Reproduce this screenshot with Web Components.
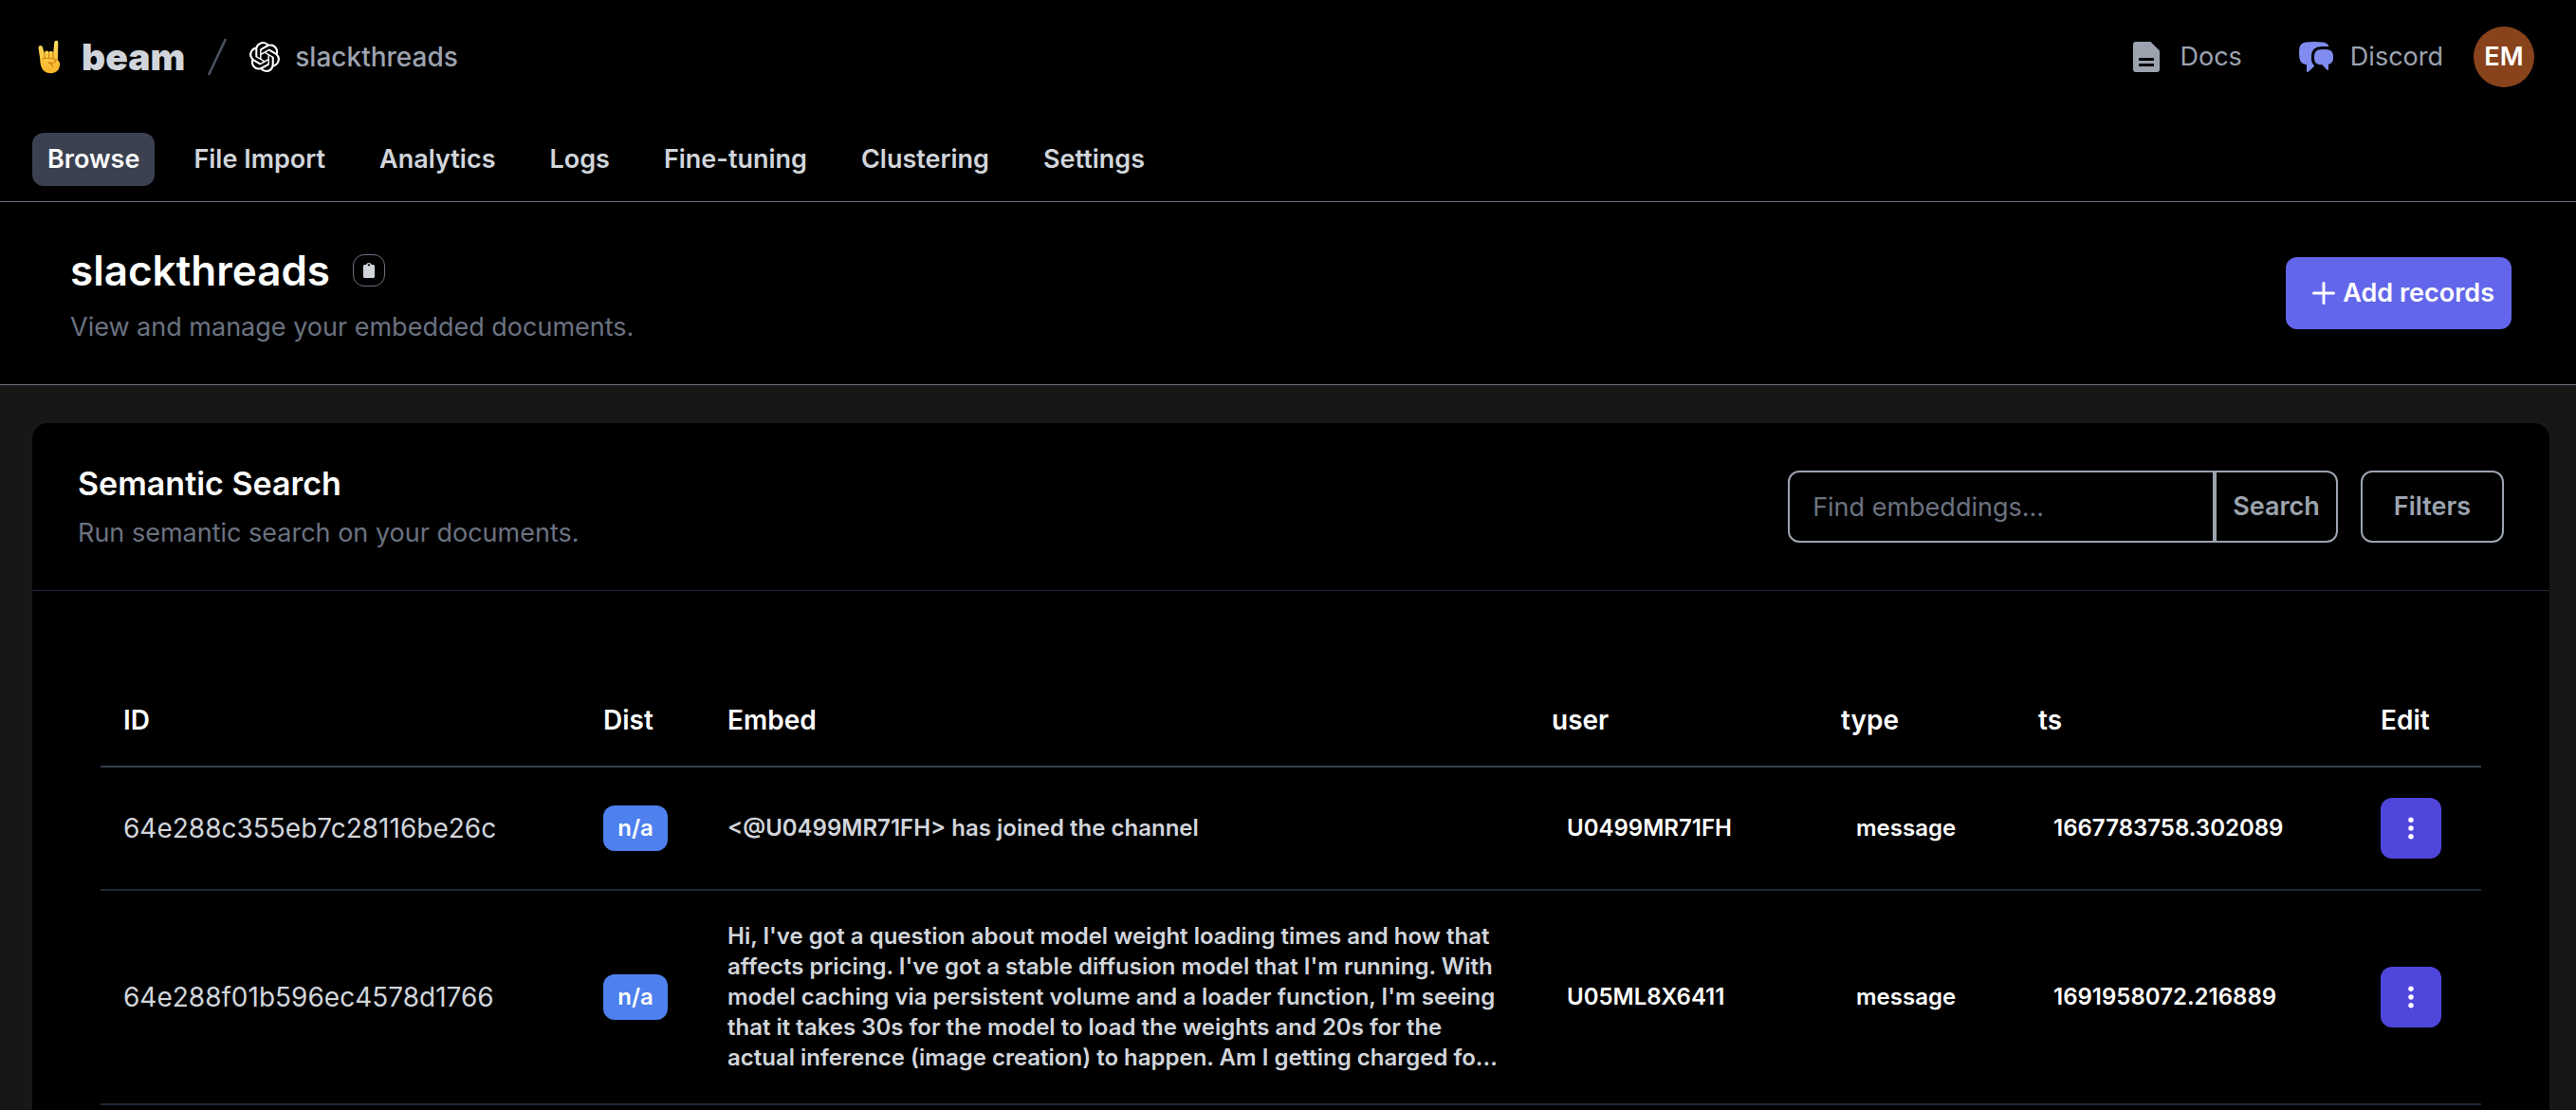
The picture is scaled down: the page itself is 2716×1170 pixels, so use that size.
<!DOCTYPE html>
<html lang="en">
<head>
<meta charset="utf-8">
<meta name="viewport" content="width=device-width, initial-scale=1">
<title>slackthreads – beam</title>
<style>
  html, body { margin: 0; background: #171717; }
  body {
    min-height: 100vh;
    display: flex;
    flex-direction: column;
    color: #fff;
    font: 400 27px/40px Inter, "Liberation Sans", sans-serif;
  }
</style>
</head>
<body>
<beam-header project="slackthreads" initials="EM"></beam-header>
<beam-tabs>
  <beam-tab current>Browse</beam-tab>
  <beam-tab>File Import</beam-tab>
  <beam-tab>Analytics</beam-tab>
  <beam-tab>Logs</beam-tab>
  <beam-tab>Fine-tuning</beam-tab>
  <beam-tab>Clustering</beam-tab>
  <beam-tab>Settings</beam-tab>
</beam-tabs>
<page-heading>
  <span slot="title">slackthreads</span>
  <span slot="subtitle">View and manage your embedded documents.</span>
</page-heading>
<search-panel>
  <span slot="title">Semantic Search</span>
  <span slot="subtitle">Run semantic search on your documents.</span>
  <search-controls slot="controls"></search-controls>
  <records-table></records-table>
</search-panel>

<script>
const ICONS = {
  rock: `<svg width="24" height="36" viewBox="0 0 24 36"><defs><linearGradient id="g" x1="0" y1="0" x2="0" y2="1"><stop offset="0" stop-color="#ffdc5e"/><stop offset="1" stop-color="#f9b527"/></linearGradient></defs>
    <path fill="url(#g)" d="M2 6.200q2.200-.7 2.900 1.500l2.100 7.200V13.500q.3-2 2.300-2 1.900 0 2.200 1.700.6-1.500 2.400-1.500 1.600 0 2 1.600l.4-.6L17.300 2.500Q17.600.8 19.400.8q1.900.1 1.900 2.200l-.4 18.200q2.700 2.400 2.100 6Q21.700 34.700 14 35.200 5.500 35.500 3.200 27.500 2.300 24.200 2.200 20L.5 8.500Q.4 6.800 2 6.200z"/>
    <path fill="none" stroke="#cf7f12" stroke-width="1.100" stroke-linecap="round" d="M7 14.800v4M11.500 14v5M16 13.500v5.500M4.800 20.500q1.800-1.700 4.200-1.300l8 .8q1.800.5 1.600 2.300-.5 2-2.600 2l-4.800-.2M20.600 21q-1.800.2-2.200 1.500M12 24.500q3.200.8 3.600 4"/></svg>`,
  slash: `<svg width="20" height="40" viewBox="0 0 20 40"><path d="M1 39 19 1" stroke="#4b5563" stroke-width="2.400"/></svg>`,
  openai: `<svg width="32" height="32" viewBox="0 0 24 24" fill="#fff"><path d="M22.2819 9.8211a5.9847 5.9847 0 0 0-.5157-4.9108 6.0462 6.0462 0 0 0-6.5098-2.9A6.0651 6.0651 0 0 0 4.9807 4.1818a5.9847 5.9847 0 0 0-3.9977 2.9 6.0462 6.0462 0 0 0 .7427 7.0966 5.98 5.98 0 0 0 .511 4.9107 6.051 6.051 0 0 0 6.5146 2.9001A5.9847 5.9847 0 0 0 13.2599 24a6.0557 6.0557 0 0 0 5.7718-4.2058 5.9894 5.9894 0 0 0 3.9977-2.9001 6.0557 6.0557 0 0 0-.7475-7.0729zm-9.022 12.6081a4.4755 4.4755 0 0 1-2.8764-1.0408l.1419-.0804 4.7783-2.7582a.7948.7948 0 0 0 .3927-.6813v-6.7369l2.02 1.1686a.071.071 0 0 1 .038.052v5.5826a4.504 4.504 0 0 1-4.4945 4.4944zm-9.6607-4.1254a4.4708 4.4708 0 0 1-.5346-3.0137l.142.0852 4.783 2.7582a.7712.7712 0 0 0 .7806 0l5.8428-3.3685v2.3324a.0804.0804 0 0 1-.0332.0615L9.74 19.9502a4.4992 4.4992 0 0 1-6.1408-1.6464zM2.3408 7.8956a4.485 4.485 0 0 1 2.3655-1.9728V11.6a.7664.7664 0 0 0 .3879.6765l5.8144 3.3543-2.0201 1.1685a.0757.0757 0 0 1-.071 0l-4.8303-2.7865A4.504 4.504 0 0 1 2.3408 7.872zm16.5963 3.8558L13.1038 8.364 15.1192 7.2a.0757.0757 0 0 1 .071 0l4.8303 2.7913a4.4944 4.4944 0 0 1-.6765 8.1042v-5.6772a.79.79 0 0 0-.407-.667zm2.0107-3.0231l-.142-.0852-4.7735-2.7818a.7759.7759 0 0 0-.7854 0L9.409 9.2297V6.8974a.0662.0662 0 0 1 .0284-.0615l4.8303-2.7866a4.4992 4.4992 0 0 1 6.6802 4.66zM8.3065 12.863l-2.02-1.1638a.0804.0804 0 0 1-.038-.0567V6.0742a4.4992 4.4992 0 0 1 7.3757-3.4537l-.142.0805L8.704 5.459a.7948.7948 0 0 0-.3927.6813zm1.0976-2.3654l2.602-1.4998 2.6069 1.4998v2.9994l-2.5974 1.4997-2.6067-1.4997Z"/></svg>`,
  doc: `<svg width="28" height="32" viewBox="0 0 28 32"><path fill="#9ca3af" fill-rule="evenodd" d="M3 0H18.500L28 9.500V29a3 3 0 0 1-3 3H3a3 3 0 0 1-3-3V3a3 3 0 0 1 3-3zM6.600 17a.6.6 0 0 0-.6.6v1.800a.6.6 0 0 0 .6.6h14.800a.6.6 0 0 0 .6-.6v-1.800a.6.6 0 0 0-.6-.6zM6.600 23a.6.6 0 0 0-.6.6v1.800a.6.6 0 0 0 .6.6h14.800a.6.6 0 0 0 .6-.6v-1.800a.6.6 0 0 0-.6-.6z"/></svg>`,
  chat: `<svg width="36" height="32" viewBox="0 0 36 32" fill="#818cf1"><path d="M7 .6Q15.500-.6 25 .6 30.500 1.200 31.400 5H23.500Q13 5.500 13 15V18.500Q13 22.500 16.200 25.800L10 31.600Q8 32.600 8 30.800V24Q1.500 23.600.5 17.500-.4 12 .4 6.500 1.200 1.500 7 .6z"/><path d="M22 8.300Q26 7.700 30 8.300 35 9 35.700 13 36.300 16.500 35.700 19.500 34.800 23 31 23.700V28.500Q31 30.800 29.200 29.500L24.500 24.200Q17.200 24.500 16.300 19.500 15.700 16 16.300 13 17.200 9 22 8.300z"/></svg>`,
  clipboard: `<svg width="12" height="16" viewBox="0 0 12 16"><path fill="#d1d5db" fill-rule="evenodd" d="M3.300 2Q3.500 0 6 0T8.700 2H10.500Q12 2 12 3.500V14.500Q12 16 10.500 16H1.500Q0 16 0 14.500V3.500Q0 2 1.500 2zM6 1.200a1.200 1.200 0 0 0-1.200 1.200V3.200h2.400V2.400A1.200 1.200 0 0 0 6 1.200z"/></svg>`,
  plus: `<svg width="24" height="24" viewBox="0 0 24 24"><path d="M12 1.500v21M1.500 12h21" stroke="#fff" stroke-width="3" stroke-linecap="round"/></svg>`,
  dots: `<svg width="6" height="24" viewBox="0 0 6 24" fill="#fff"><circle cx="3" cy="3.200" r="2.700"/><circle cx="3" cy="12" r="2.700"/><circle cx="3" cy="20.800" r="2.700"/></svg>`
};

const BASE = `
  * { box-sizing: border-box; }
  svg { display: block; flex: none; }
  a { color: inherit; text-decoration: none; }
  button, input { font: inherit; margin: 0; }
  button { cursor: pointer; }
`;

class BeamElement extends HTMLElement {
  constructor() {
    super();
    this.attachShadow({ mode: 'open' });
  }
  connectedCallback() {
    this.shadowRoot.innerHTML = `<style>${BASE}${this.styles()}</style>${this.markup()}`;
  }
}

customElements.define('beam-icon', class extends BeamElement {
  styles() { return `:host { display: block; flex: none; }`; }
  markup() { return ICONS[this.getAttribute('name')]; }
});

customElements.define('beam-header', class extends BeamElement {
  styles() { return `
    :host { display: block; background: #000; color: #9ca3af; }
    header { display: flex; align-items: center; justify-content: space-between; padding: 28px 44px 0 40px; }
    .crumbs, .links { display: flex; align-items: center; }
    .brand { display: flex; align-items: center; gap: 22px; margin-right: 24px; color: #d1d5db; font-size: 39px; font-weight: 900; }
    .project { display: flex; align-items: center; gap: 16px; margin-left: 24px; font-size: 28px; font-weight: 500; }
    .link { display: flex; align-items: center; }
    .docs { gap: 22px; margin-right: 60px; }
    .chat { gap: 18px; margin-right: 32px; }
    .avatar { width: 64px; height: 64px; padding: 0; border: 0; border-radius: 50%; background: #88431c; color: #fff; font-weight: 600; }
  `; }
  markup() { return `
    <header>
      <div class="crumbs">
        <a class="brand" href="#"><beam-icon name="rock"></beam-icon>beam</a>
        <beam-icon name="slash"></beam-icon>
        <a class="project" href="#"><beam-icon name="openai"></beam-icon>${this.getAttribute('project')}</a>
      </div>
      <div class="links">
        <a class="link docs" href="#"><beam-icon name="doc"></beam-icon>Docs</a>
        <a class="link chat" href="#"><beam-icon name="chat"></beam-icon>Discord</a>
        <button class="avatar">${this.getAttribute('initials')}</button>
      </div>
    </header>`; }
});

customElements.define('beam-tabs', class extends BeamElement {
  styles() { return `
    :host { display: block; background: #000; border-bottom: 1px solid #6b7280; }
    nav { display: flex; gap: 25px; padding: 48px 34px 16px; }
  `; }
  markup() { return `<nav><slot></slot></nav>`; }
});

customElements.define('beam-tab', class extends BeamElement {
  styles() { return `
    :host { display: block; color: #d1d5db; font-weight: 600; }
    a { display: block; padding: 8px 16px; border-radius: 12px; white-space: nowrap; }
    :host([current]) a { background: #3b4150; color: #f9fafb; }
  `; }
  markup() { return `<a href="#"><slot></slot></a>`; }
});

customElements.define('page-heading', class extends BeamElement {
  styles() { return `
    :host { display: block; background: #000; border-bottom: 1px solid #6b7280; }
    section { display: flex; align-items: center; justify-content: space-between; padding: 40px 68px 40px 74px; }
    .row { display: flex; align-items: center; gap: 24px; }
    h1 { margin: 0; font-size: 44px; line-height: 64px; font-weight: 600; }
    p { margin: 8px 0 0; color: #6b7280; }
    .copy { display: flex; align-items: center; justify-content: center; width: 34px; height: 34px; padding: 0; border: 1px solid #6b7280; border-radius: 12px; background: none; }
    .add { display: flex; align-items: center; gap: 8px; height: 76px; padding: 0 18px 0 28px; border: 0; border-radius: 12px; background: #6366ea; color: #fff; font-weight: 600; white-space: nowrap; }
  `; }
  markup() { return `
    <section>
      <div>
        <div class="row">
          <h1><slot name="title"></slot></h1>
          <button class="copy" aria-label="Copy name"><beam-icon name="clipboard"></beam-icon></button>
        </div>
        <p><slot name="subtitle"></slot></p>
      </div>
      <button class="add"><beam-icon name="plus"></beam-icon>Add records</button>
    </section>`; }
});

customElements.define('search-panel', class extends BeamElement {
  styles() { return `
    :host { display: flex; flex: 1; padding: 40px 28px 0 34px; }
    section { flex: 1; min-width: 0; border-radius: 16px 16px 0 0; background: #000; }
    .head { display: flex; align-items: center; justify-content: space-between; padding: 40px 48px; border-bottom: 1px solid #1f2937; }
    h2 { margin: 0; font-size: 34px; line-height: 48px; font-weight: 600; }
    p { margin: 8px 0 0; color: #6b7280; }
    .body { padding: 88px 72px 0; }
  `; }
  markup() { return `
    <section>
      <div class="head">
        <div>
          <h2><slot name="title"></slot></h2>
          <p><slot name="subtitle"></slot></p>
        </div>
        <slot name="controls"></slot>
      </div>
      <div class="body"><slot></slot></div>
    </section>`; }
});

customElements.define('search-controls', class extends BeamElement {
  styles() { return `
    :host { display: flex; gap: 24px; color: #9ca3af; }
    form { display: flex; }
    input, button { height: 76px; border: 2px solid #9ca3af; background: #000; color: inherit; }
    input { width: 450px; padding: 0 24px; border-radius: 12px 0 0 12px; outline: 0; }
    input::placeholder { color: #6b7280; opacity: 1; }
    button { padding: 0 17px; border-radius: 0 12px 12px 0; font-weight: 600; }
    .filters { padding: 0 33px; border-radius: 12px; }
  `; }
  markup() { return `
    <form onsubmit="return false">
      <input type="text" aria-label="Find embeddings" placeholder="Find embeddings...">
      <button type="submit">Search</button>
    </form>
    <button class="filters" type="button">Filters</button>`; }
});

const RECORDS = [
  { id: '64e288c355eb7c28116be26c', dist: 'n/a', embed: '&lt;@U0499MR71FH&gt; has joined the channel', user: 'U0499MR71FH', type: 'message', ts: '1667783758.302089' },
  { id: '64e288f01b596ec4578d1766', dist: 'n/a', embed: "Hi, I've got a question about model weight loading times and how that affects pricing. I've got a stable diffusion model that I'm running. With model caching via persistent volume and a loader function, I'm seeing that it takes 30s for the model to load the weights and 20s for the actual inference (image creation) to happen. Am I getting charged fo...", user: 'U05ML8X6411', type: 'message', ts: '1691958072.216889' }
];

customElements.define('records-table', class extends BeamElement {
  styles() { return `
    :host { display: block; }
    table { width: 100%; table-layout: fixed; border-collapse: separate; border-spacing: 0; }
    .c-id { width: 506px; } .c-dist { width: 131px; } .c-embed { width: 869px; } .c-user { width: 305px; }
    .c-type { width: 208px; } .c-ts { width: 361px; } .c-edit { width: 130px; }
    th { padding: 28px 24px; border-bottom: 2px solid #374151; text-align: left; font-size: 28px; font-weight: 600; }
    td { padding: 32px 24px; border-bottom: 2px solid #1f2937; vertical-align: middle; }
    .id { color: #d1d5db; font-size: 28px; }
    .badge { display: block; width: 68px; border-radius: 12px; background: #4e80ee; text-align: center; font-size: 24px; line-height: 48px; font-weight: 600; }
    .embed { color: #d1d5db; font-size: 24px; line-height: 32px; font-weight: 600; }
    .value { padding-left: 40px; font-size: 24px; line-height: 32px; font-weight: 600; white-space: nowrap; }
    .edit { display: flex; align-items: center; justify-content: center; width: 64px; height: 64px; padding: 0; border: 0; border-radius: 12px; background: #4f46dc; }
  `; }
  markup() { return `
    <table>
      <colgroup><col class="c-id"><col class="c-dist"><col class="c-embed"><col class="c-user"><col class="c-type"><col class="c-ts"><col class="c-edit"></colgroup>
      <thead><tr><th>ID</th><th>Dist</th><th>Embed</th><th>user</th><th>type</th><th>ts</th><th>Edit</th></tr></thead>
      <tbody>${RECORDS.map(r => `
        <tr>
          <td class="id">${r.id}</td>
          <td><span class="badge">${r.dist}</span></td>
          <td class="embed">${r.embed}</td>
          <td class="value">${r.user}</td>
          <td class="value">${r.type}</td>
          <td class="value">${r.ts}</td>
          <td><button class="edit" aria-label="Edit record"><beam-icon name="dots"></beam-icon></button></td>
        </tr>`).join('')}
      </tbody>
    </table>`; }
});
</script>
</body>
</html>
